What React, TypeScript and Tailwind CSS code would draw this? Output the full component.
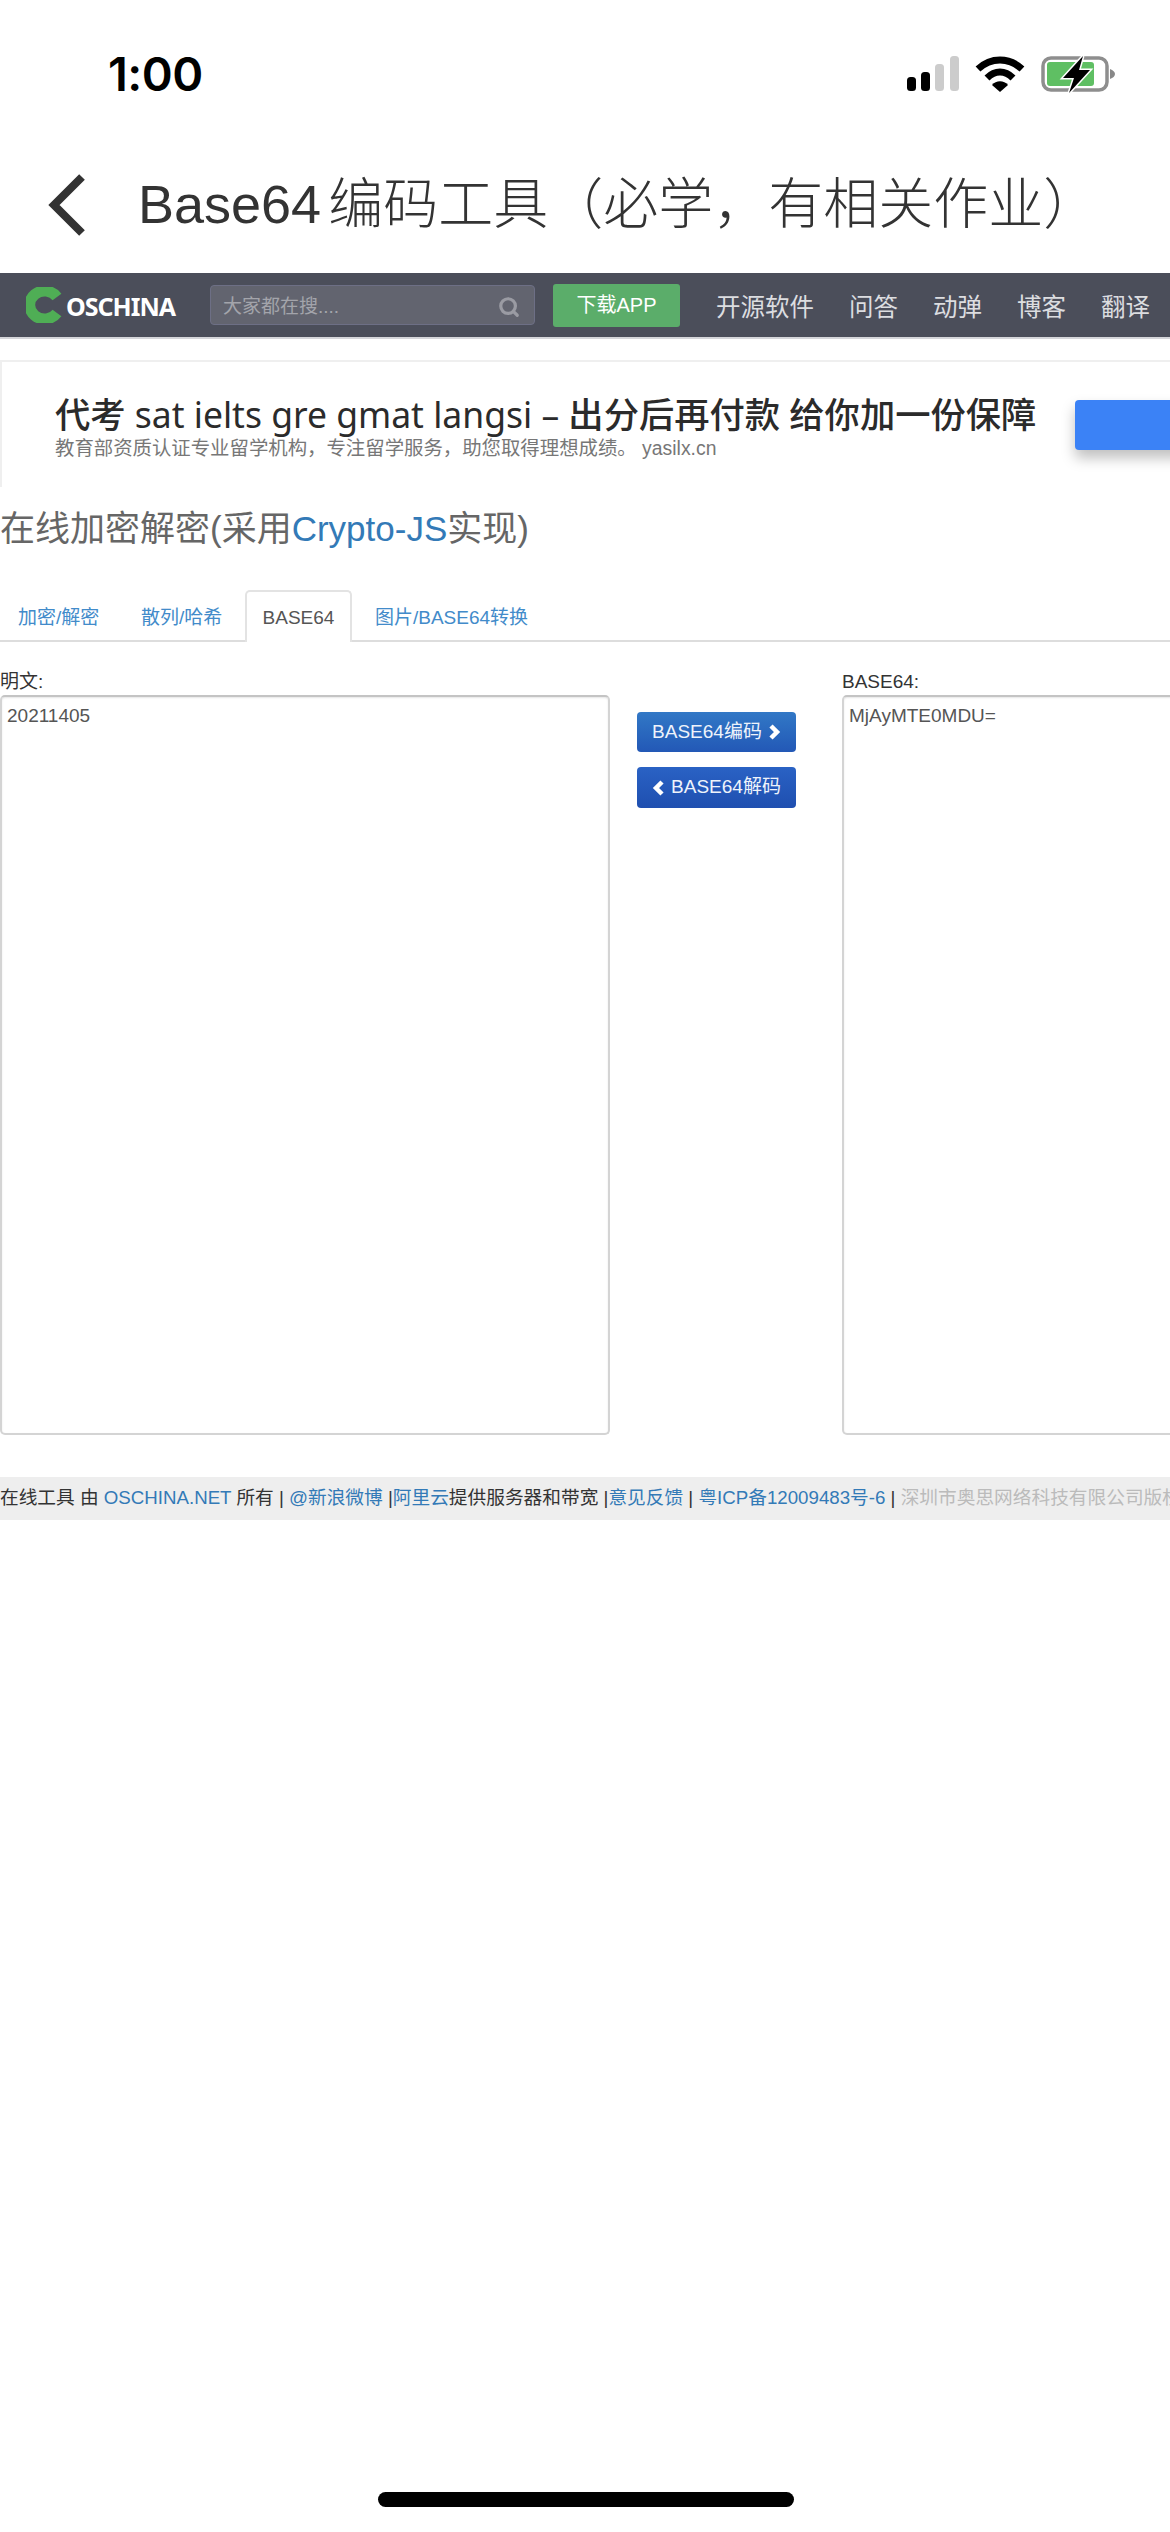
import React from 'react';
import { Search } from 'lucide-react';

const navItems = ['开源软件', '问答', '动弹', '博客', '翻译'];

// Status bar glyphs
function StatusIcons() {
  return (
    <div className="flex items-center">
      <svg width="52" height="36" viewBox="0 0 52 36" className="mr-[16px]">
        <rect x="0" y="21" width="9" height="14" rx="3.5" fill="#000" />
        <rect x="14" y="16" width="9" height="19" rx="3.5" fill="#000" />
        <rect x="28" y="8" width="9" height="27" rx="3.5" fill="#ccc" />
        <rect x="43" y="0" width="9" height="35" rx="3.5" fill="#ccc" />
      </svg>
      <svg width="50" height="36" viewBox="0 0 50 36" className="mr-[16px]">
        <path d="M3 13C16 1 34 1 47 13" fill="none" stroke="#000" strokeWidth="7" />
        <path d="M12 22C20 14 30 14 38 22" fill="none" stroke="#000" strokeWidth="7" />
        <path d="M17 29C21 24 29 24 33 29L25 36Z" fill="#000" />
      </svg>
      <svg width="76" height="38" viewBox="0 0 76 38">
        <rect x="2" y="3" width="64" height="32" rx="8" fill="none" stroke="#8e8e8e" strokeWidth="3.5" />
        <rect x="6" y="7" width="47" height="24" rx="3" fill="#5fbf63" />
        <path d="M69 14c3 1 5 3 5 5s-2 4-5 5z" fill="#888" />
        <path d="M42 1 22 23h11l-5 15 21-23H38l4-14z" fill="#000" stroke="#fff" strokeWidth="3" paintOrder="stroke" />
      </svg>
    </div>
  );
}

function Chevron({ dir }: { dir: 'left' | 'right' }) {
  return (
    <svg width="13" height="16" viewBox="0 0 13 16" className="shrink-0">
      <path
        d={dir === 'right' ? 'M3 2l6 6-6 6' : 'M10 2L4 8l6 6'}
        fill="none"
        stroke="#fff"
        strokeWidth="4.5"
      />
    </svg>
  );
}

export default function App() {
  return (
    <div className="relative w-[1170px] h-[2532px] overflow-hidden bg-white font-['Liberation_Sans','Noto_Sans_CJK_SC',sans-serif]">
      {/* iOS status bar */}
      <div className="h-[148px] flex items-center justify-between pl-[108px] pr-[53px]">
        <span className="font-['Inter',sans-serif] font-semibold text-[47px] leading-none text-black tracking-[-0.5px] -mt-[2px]">1:00</span>
        <StatusIcons />
      </div>

      {/* Page title */}
      <div className="h-[125px] flex items-center pl-[47px] pb-[12px]">
        <svg width="40" height="62" viewBox="0 0 40 62" className="shrink-0">
          <path d="M35 3L7 31l28 28" fill="none" stroke="#333" strokeWidth="8" />
        </svg>
        <h1 className="ml-[51px] text-[55px] leading-none text-[#333] whitespace-nowrap font-light">
          <span className="text-[54px]">Base64</span>
          <span className="ml-[7px]">编码工具（必学，有相关作业）</span>
        </h1>
      </div>

      {/* OSChina navbar */}
      <div className="h-[66px] bg-[#4b4e5a] border-b-2 border-[#d5d6da] flex items-center pl-[26px]">
        <svg width="36" height="36" viewBox="0 0 36 36" className="shrink-0">
          <path d="M31 10A15 14 0 1 0 31 26" fill="none" stroke="#4fae55" strokeWidth="11" />
        </svg>
        <span className="ml-[4px] w-[144px] font-['Noto_Sans',sans-serif] font-bold text-[25px] leading-none text-white tracking-[-1px] pt-[2px]">OSCHINA</span>
        <div className="w-[325px] h-[40px] rounded-[4px] bg-[#62646f] border border-[#6d6f85] flex items-center justify-between pl-[12px] pr-[14px] pt-[2px]">
          <span className="text-[19px] leading-none text-[#a3a4ab]">大家都在搜....</span>
          <Search size={22} strokeWidth={3.5} color="#9a9ba3" className="mt-[2px]" />
        </div>
        <div className="ml-[18px] w-[127px] h-[43px] rounded-[3px] bg-[#5bad6a] flex items-center justify-center text-[20px] text-white">下载APP</div>
        <div className="ml-[36px] flex gap-[35px] pt-[6px]">
          {navItems.map(item => (
            <span key={item} className="text-[24.500px] leading-none text-[#dcdde0] whitespace-nowrap">{item}</span>
          ))}
        </div>
      </div>

      {/* Ad banner */}
      <div className="mt-[21px] h-[127px] relative border-t-2 border-l-2 border-[#efefef] pl-[53px] pt-[30px]">
        <div className="font-['Noto_Sans','Noto_Sans_CJK_SC',sans-serif] text-[35.300px] leading-[44px] text-[#2b2b2b] font-medium whitespace-nowrap">
          代考 <span className="text-[35.500px] font-normal">sat ielts gre gmat langsi –</span> 出分后再付款 给你加一份保障
        </div>
        <div className="text-[19.400px] leading-[24px] text-[#777] whitespace-nowrap">
          教育部资质认证专业留学机构，专注留学服务，助您取得理想成绩。 yasilx.cn
        </div>
        <div className="absolute left-[1073px] top-[38px] w-[110px] h-[50px] rounded-[4px] bg-[#3b82f6] shadow-[0_8px_14px_rgba(0,0,0,0.25)]" />
      </div>

      {/* Heading */}
      <h2 className="mt-[20px] h-[44px] text-[35px] leading-[44px] text-[#666] whitespace-nowrap font-normal">
        在线加密解密(采用<span className="text-[#337ab7]">Crypto-JS</span>实现)
      </h2>

      {/* Tabs */}
      <div className="mt-[39px] h-[52px] border-b-2 border-[#ddd] flex items-end text-[19px] leading-none">
        <span className="ml-[18px] w-[123px] pb-[13px] text-[#428bca]">加密/解密</span>
        <span className="w-[104px] pb-[13px] text-[#428bca]">散列/哈希</span>
        <span className="relative -mb-[2px] w-[107px] h-[52px] bg-white border-2 border-b-0 border-[#e3e3e3] rounded-t-[5px] flex items-center justify-center text-[#555]">BASE64</span>
        <span className="ml-[23px] pb-[13px] text-[#428bca]">图片/BASE64转换</span>
      </div>

      {/* Converter */}
      <div className="mt-[27px] flex items-start">
        <div className="w-[610px] shrink-0">
          <div className="h-[26px] text-[19px] leading-[26px] text-[#333]">明文:</div>
          <textarea
            readOnly
            defaultValue="20211405"
            className="block w-full h-[740px] resize-none rounded-[5px] border-2 border-[#d4d4d4] border-t-[#c4c4c4] pl-[5px] pt-[7px] text-[19px] leading-[24px] text-[#555] outline-none shadow-[inset_0_1px_2px_rgba(0,0,0,0.1)]"
          />
        </div>
        <div className="ml-[27px] w-[205px] shrink-0 pt-[43px] flex flex-col gap-[15px]">
          <div className="w-[159px] h-[40px] rounded-[4px] bg-gradient-to-b from-[#3278c6] to-[#2358b6] flex items-center justify-center gap-[6px] text-[19px] text-[#eef3fb]">
            BASE64编码
            <Chevron dir="right" />
          </div>
          <div className="w-[159px] h-[41px] rounded-[4px] bg-gradient-to-b from-[#2a62c4] to-[#1f4fb0] flex items-center justify-center gap-[6px] text-[19px] text-[#eef3fb]">
            <Chevron dir="left" />
            BASE64解码
          </div>
        </div>
        <div className="w-[610px] shrink-0">
          <div className="h-[26px] text-[19px] leading-[26px] text-[#333]">BASE64:</div>
          <textarea
            readOnly
            defaultValue="MjAyMTE0MDU="
            className="block w-full h-[740px] resize-none rounded-[5px] border-2 border-[#d4d4d4] border-t-[#c4c4c4] pl-[5px] pt-[7px] text-[19px] leading-[24px] text-[#555] outline-none shadow-[inset_0_1px_2px_rgba(0,0,0,0.1)]"
          />
        </div>
      </div>

      {/* Footer strip */}
      <div className="mt-[42px] h-[43px] bg-[#eee] flex items-center text-[18.700px] leading-none text-[#333] whitespace-nowrap">
        <span>
          在线工具 由 <span className="text-[#337ab7]">OSCHINA.NET</span> 所有 | <span className="text-[#337ab7]">@新浪微博</span> |<span className="text-[#337ab7]">阿里云</span>提供服务器和带宽 |<span className="text-[#337ab7]">意见反馈</span> | <span className="text-[#337ab7]">粤ICP备12009483号-6</span> | <span className="text-[#bbb]">深圳市奥思网络科技有限公司版权所有</span>
        </span>
      </div>

      {/* Home indicator */}
      <div className="absolute left-[378px] top-[2492px] w-[416px] h-[15px] rounded-full bg-black" />
    </div>
  );
}
